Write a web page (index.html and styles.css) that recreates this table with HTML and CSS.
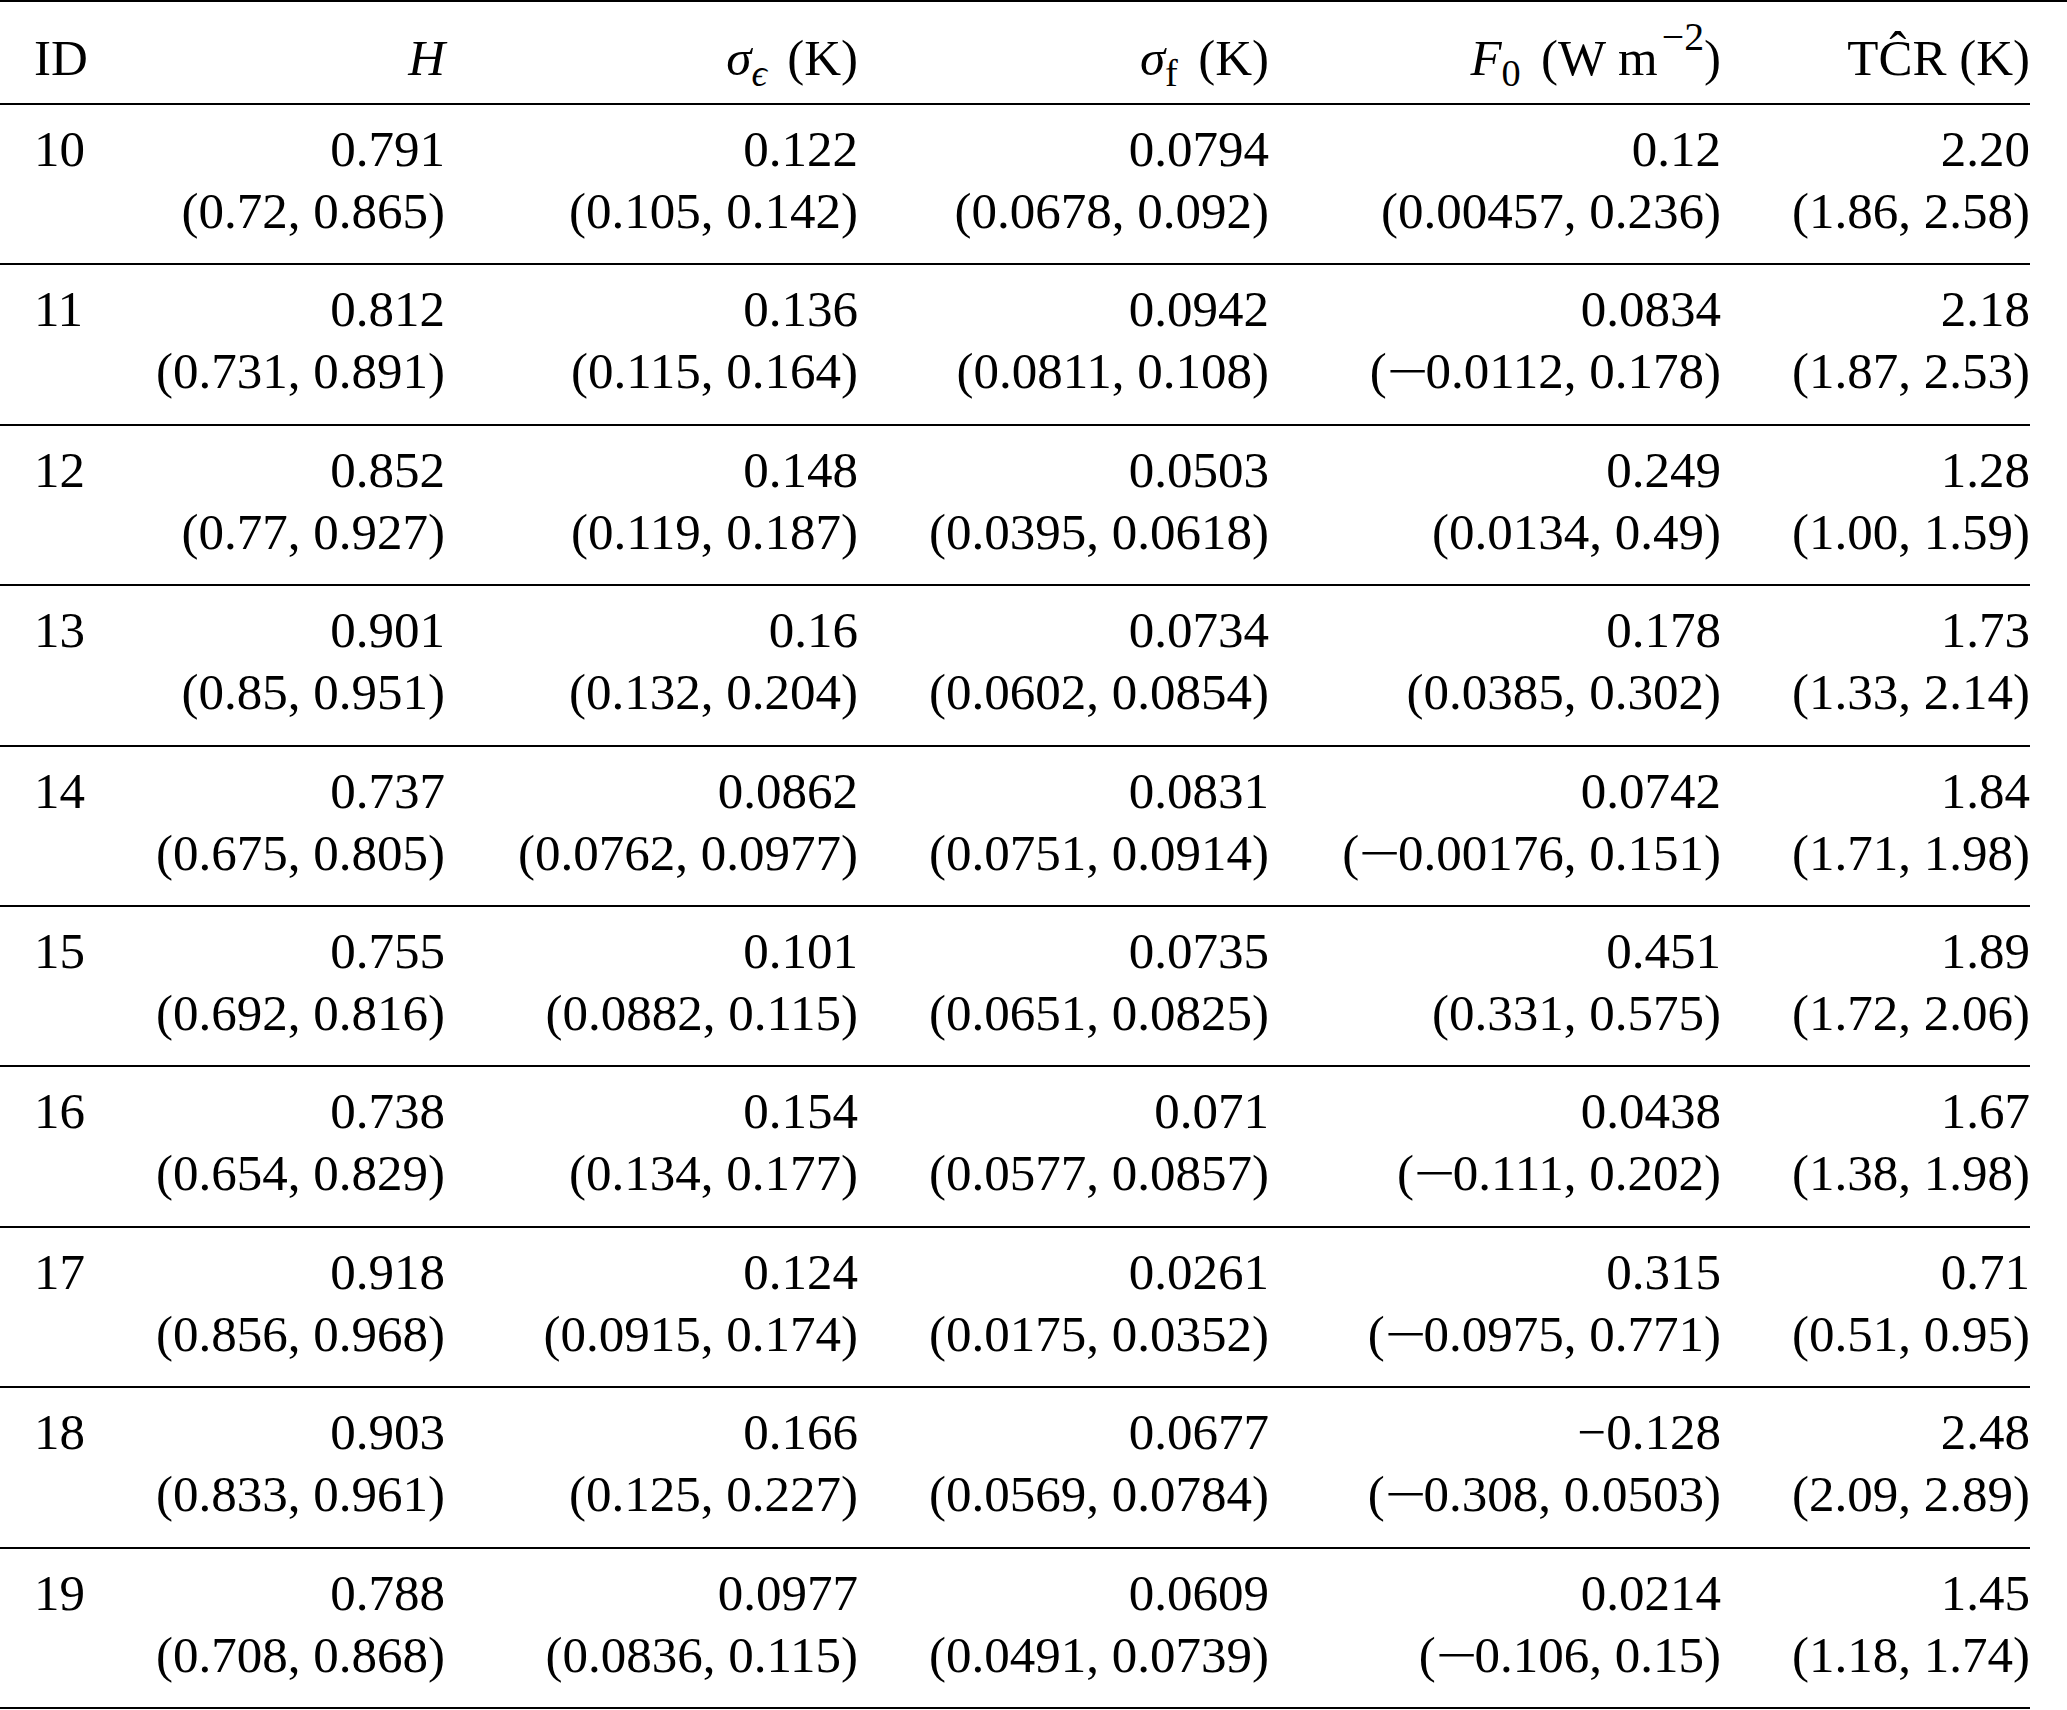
FILE: index.html
```html
<!DOCTYPE html>
<html lang="en">
<head>
<meta charset="utf-8">
<title>Table</title>
<link rel="stylesheet" href="styles.css">
</head>
<body>
<div class="table">
  <div class="row head">
    <div class="cell id">ID</div>
    <div class="cell"><i>H</i></div>
    <div class="cell"><span><i>σ</i><span class="sub"><i>ϵ</i></span> (K)</span></div>
    <div class="cell"><span><i>σ</i><span class="sub">f</span> (K)</span></div>
    <div class="cell"><span><i>F</i><span class="sub">0</span> (W m<span class="sup">−2</span>)</span></div>
    <div class="cell"><span>TĈR (K)</span></div>
  </div>
  <div class="row">
    <div class="cell id">10</div>
    <div class="cell"><span>0.791</span><span>(0.72, 0.865)</span></div>
    <div class="cell"><span>0.122</span><span>(0.105, 0.142)</span></div>
    <div class="cell"><span>0.0794</span><span>(0.0678, 0.092)</span></div>
    <div class="cell"><span>0.12</span><span>(0.00457, 0.236)</span></div>
    <div class="cell"><span>2.20</span><span>(1.86, 2.58)</span></div>
  </div>
  <div class="row">
    <div class="cell id">11</div>
    <div class="cell"><span>0.812</span><span>(0.731, 0.891)</span></div>
    <div class="cell"><span>0.136</span><span>(0.115, 0.164)</span></div>
    <div class="cell"><span>0.0942</span><span>(0.0811, 0.108)</span></div>
    <div class="cell"><span>0.0834</span><span>(<span class="neg">−</span>0.0112, 0.178)</span></div>
    <div class="cell"><span>2.18</span><span>(1.87, 2.53)</span></div>
  </div>
  <div class="row">
    <div class="cell id">12</div>
    <div class="cell"><span>0.852</span><span>(0.77, 0.927)</span></div>
    <div class="cell"><span>0.148</span><span>(0.119, 0.187)</span></div>
    <div class="cell"><span>0.0503</span><span>(0.0395, 0.0618)</span></div>
    <div class="cell"><span>0.249</span><span>(0.0134, 0.49)</span></div>
    <div class="cell"><span>1.28</span><span>(1.00, 1.59)</span></div>
  </div>
  <div class="row">
    <div class="cell id">13</div>
    <div class="cell"><span>0.901</span><span>(0.85, 0.951)</span></div>
    <div class="cell"><span>0.16</span><span>(0.132, 0.204)</span></div>
    <div class="cell"><span>0.0734</span><span>(0.0602, 0.0854)</span></div>
    <div class="cell"><span>0.178</span><span>(0.0385, 0.302)</span></div>
    <div class="cell"><span>1.73</span><span>(1.33, 2.14)</span></div>
  </div>
  <div class="row">
    <div class="cell id">14</div>
    <div class="cell"><span>0.737</span><span>(0.675, 0.805)</span></div>
    <div class="cell"><span>0.0862</span><span>(0.0762, 0.0977)</span></div>
    <div class="cell"><span>0.0831</span><span>(0.0751, 0.0914)</span></div>
    <div class="cell"><span>0.0742</span><span>(<span class="neg">−</span>0.00176, 0.151)</span></div>
    <div class="cell"><span>1.84</span><span>(1.71, 1.98)</span></div>
  </div>
  <div class="row">
    <div class="cell id">15</div>
    <div class="cell"><span>0.755</span><span>(0.692, 0.816)</span></div>
    <div class="cell"><span>0.101</span><span>(0.0882, 0.115)</span></div>
    <div class="cell"><span>0.0735</span><span>(0.0651, 0.0825)</span></div>
    <div class="cell"><span>0.451</span><span>(0.331, 0.575)</span></div>
    <div class="cell"><span>1.89</span><span>(1.72, 2.06)</span></div>
  </div>
  <div class="row">
    <div class="cell id">16</div>
    <div class="cell"><span>0.738</span><span>(0.654, 0.829)</span></div>
    <div class="cell"><span>0.154</span><span>(0.134, 0.177)</span></div>
    <div class="cell"><span>0.071</span><span>(0.0577, 0.0857)</span></div>
    <div class="cell"><span>0.0438</span><span>(<span class="neg">−</span>0.111, 0.202)</span></div>
    <div class="cell"><span>1.67</span><span>(1.38, 1.98)</span></div>
  </div>
  <div class="row">
    <div class="cell id">17</div>
    <div class="cell"><span>0.918</span><span>(0.856, 0.968)</span></div>
    <div class="cell"><span>0.124</span><span>(0.0915, 0.174)</span></div>
    <div class="cell"><span>0.0261</span><span>(0.0175, 0.0352)</span></div>
    <div class="cell"><span>0.315</span><span>(<span class="neg">−</span>0.0975, 0.771)</span></div>
    <div class="cell"><span>0.71</span><span>(0.51, 0.95)</span></div>
  </div>
  <div class="row">
    <div class="cell id">18</div>
    <div class="cell"><span>0.903</span><span>(0.833, 0.961)</span></div>
    <div class="cell"><span>0.166</span><span>(0.125, 0.227)</span></div>
    <div class="cell"><span>0.0677</span><span>(0.0569, 0.0784)</span></div>
    <div class="cell"><span>−0.128</span><span>(<span class="neg">−</span>0.308, 0.0503)</span></div>
    <div class="cell"><span>2.48</span><span>(2.09, 2.89)</span></div>
  </div>
  <div class="row">
    <div class="cell id">19</div>
    <div class="cell"><span>0.788</span><span>(0.708, 0.868)</span></div>
    <div class="cell"><span>0.0977</span><span>(0.0836, 0.115)</span></div>
    <div class="cell"><span>0.0609</span><span>(0.0491, 0.0739)</span></div>
    <div class="cell"><span>0.0214</span><span>(<span class="neg">−</span>0.106, 0.15)</span></div>
    <div class="cell"><span>1.45</span><span>(1.18, 1.74)</span></div>
  </div>
</div>
</body>
</html>
```

FILE: styles.css
```css
html, body {
  margin: 0;
  padding: 0;
  background: #ffffff;
}

body {
  font-family: "Liberation Serif", "DejaVu Serif", serif;
  font-size: 51px;
  line-height: 62px;
  color: #000000;
}

.table {
  width: 2067px;
  box-sizing: border-box;
  padding-right: 37px;
  border-top: 2px solid #000000;
}

.row {
  display: grid;
  grid-template-columns: 130px 315px 413px 411px 452px 309px;
  box-sizing: border-box;
  height: 160.4px;
  padding-top: 13px;
  border-bottom: 2px solid #000000;
}

.row.head {
  height: 103px;
  padding-top: 10px;
  align-items: center;
}

.cell {
  display: flex;
  flex-direction: column;
  align-items: flex-end;
  white-space: nowrap;
}

.cell.id {
  align-items: flex-start;
  padding-left: 34px;
}

.sub {
  font-size: 0.75em;
  line-height: 0;
  vertical-align: -0.3em;
  margin-right: 0.2em;
}

.sup {
  font-size: 0.78em;
  line-height: 0;
  vertical-align: 0.62em;
  margin-left: 0.1em;
}

.neg {
  display: inline-block;
  transform: scaleX(1.45);
  transform-origin: left center;
  margin-right: 10px;
}
```
